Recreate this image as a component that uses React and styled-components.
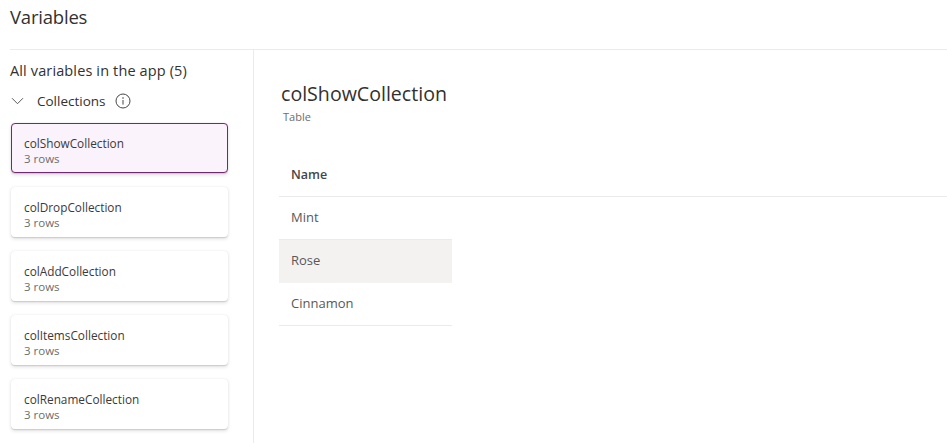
import React from 'react';
import styled, { createGlobalStyle } from 'styled-components';

const GlobalStyle = createGlobalStyle`
  html, body {
    margin: 0;
    padding: 0;
    background: #fff;
    overflow: hidden;
  }
  body {
    font-family: "Open Sans", "Noto Sans", sans-serif;
    color: #323130;
  }
`;

const Page = styled.div`
  width: 947px;
  height: 443px;
  overflow: hidden;
  display: flex;
  flex-direction: column;
  padding-left: 10px;
  box-sizing: border-box;
`;

const Header = styled.header`
  height: 50px;
  flex: none;
  box-sizing: border-box;
  padding-top: 5px;
  border-bottom: 1px solid #edebe9;
`;

const PageTitle = styled.h1`
  margin: 0;
  font-size: 18.5px;
  line-height: 24px;
  font-weight: 400;
  letter-spacing: -0.2px;
  color: #323130;
`;

const Body = styled.div`
  flex: 1;
  display: flex;
  min-height: 0;
`;

const Sidebar = styled.aside`
  width: 244px;
  flex: none;
  box-sizing: border-box;
  border-right: 1px solid #edebe9;
  padding-top: 11px;
`;

const SidebarTitle = styled.div`
  font-size: 14.5px;
  line-height: 20px;
  letter-spacing: 0.13px;
  color: #323130;
`;

const GroupRow = styled.div`
  display: flex;
  align-items: center;
  height: 20px;
  margin-top: 10px;
  padding-left: 1px;
  color: #323130;
  font-size: 13.5px;
`;

const GroupLabel = styled.span`
  margin-left: 13px;
  margin-right: 9px;
`;

const CardList = styled.div`
  display: flex;
  flex-direction: column;
  gap: 14px;
  margin-top: 12px;
  padding-left: 1px;
`;

const Card = styled.div`
  width: 217px;
  height: 50px;
  box-sizing: border-box;
  border-radius: 4px;
  padding: 6px 0 0 12px;
  display: flex;
  flex-direction: column;
  justify-content: center;
  background: ${p => (p.$selected ? '#faf3fb' : '#fff')};
  border: ${p => (p.$selected ? '1px solid #742774' : '1px solid transparent')};
  box-shadow: 0 1.6px 3.6px rgba(0, 0, 0, 0.13), 0 0.3px 0.9px rgba(0, 0, 0, 0.11);
`;

const CardName = styled.div`
  font-size: 11.8px;
  line-height: 15px;
  color: #3b3a39;
`;

const CardMeta = styled.div`
  font-size: 11.5px;
  line-height: 15px;
  color: #6f6d6b;
`;

const Main = styled.main`
  flex: 1;
  min-width: 0;
  padding: 30px 0 0 25px;
`;

const DetailTitle = styled.h2`
  margin: 0 0 0 2px;
  font-size: 19.6px;
  line-height: 28px;
  font-weight: 400;
  color: #323130;
`;

const DetailType = styled.div`
  margin: 2px 0 0 4px;
  font-size: 11px;
  line-height: 14px;
  color: #6f6d6b;
`;

const ColumnHeader = styled.div`
  margin-top: 30px;
  height: 43px;
  box-sizing: border-box;
  padding: 0 0 2px 12px;
  display: flex;
  align-items: center;
  border-bottom: 1px solid #edebe9;
  font-size: 12.5px;
  font-weight: 600;
  color: #484644;
`;

const Rows = styled.div`
  width: 173px;
`;

const Row = styled.div`
  height: 43px;
  box-sizing: border-box;
  padding: 0 0 2px 12px;
  display: flex;
  align-items: center;
  border-bottom: 1px solid ${p => (p.$hovered ? '#f3f2f1' : '#edebe9')};
  background: ${p => (p.$hovered ? '#f3f2f1' : '#fff')};
  font-size: 13px;
  color: #5a5856;
`;

const Chevron = () => (
  <svg width="13" height="8" viewBox="0 0 13 8" fill="none">
    <path d="M1 1.2 6.5 6.7 12 1.2" stroke="#484644" strokeWidth="0.9" />
  </svg>
);

const InfoIcon = () => (
  <svg width="16" height="16" viewBox="0 0 16 16" fill="none">
    <circle cx="8" cy="8" r="7" stroke="#484644" strokeWidth="1" />
    <circle cx="8" cy="5" r="0.8" fill="#484644" />
    <path d="M8 7v4.6" stroke="#484644" strokeWidth="1" />
  </svg>
);

const collections = [
  'colShowCollection',
  'colDropCollection',
  'colAddCollection',
  'colItemsCollection',
  'colRenameCollection',
];

const values = ['Mint', 'Rose', 'Cinnamon'];

export default function App() {
  return (
    <>
      <GlobalStyle />
      <Page>
        <Header>
          <PageTitle>Variables</PageTitle>
        </Header>
        <Body>
          <Sidebar>
            <SidebarTitle>All variables in the app (5)</SidebarTitle>
            <GroupRow>
              <Chevron />
              <GroupLabel>Collections</GroupLabel>
              <InfoIcon />
            </GroupRow>
            <CardList>
              {collections.map((name, i) => (
                <Card key={name} $selected={i === 0}>
                  <CardName>{name}</CardName>
                  <CardMeta>3 rows</CardMeta>
                </Card>
              ))}
            </CardList>
          </Sidebar>
          <Main>
            <DetailTitle>colShowCollection</DetailTitle>
            <DetailType>Table</DetailType>
            <ColumnHeader>Name</ColumnHeader>
            <Rows>
              {values.map(v => (
                <Row key={v} $hovered={v === 'Rose'}>{v}</Row>
              ))}
            </Rows>
          </Main>
        </Body>
      </Page>
    </>
  );
}
